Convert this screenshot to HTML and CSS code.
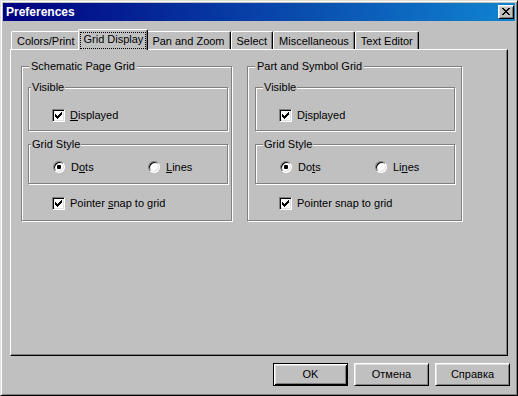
FILE: index.html
```html
<!DOCTYPE html>
<html>
<head>
<meta charset="utf-8">
<title>Preferences</title>
<link rel="stylesheet" href="styles.css">
</head>
<body>
<div class="window">
  <div class="titlebar">
    <span class="title">Preferences</span>
    <div class="close">
      <svg width="8" height="7" viewBox="0 0 8 7" shape-rendering="crispEdges"><path d="M0 0h2v1H0zM6 0h2v1H6zM1 1h2v1H1zM5 1h2v1H5zM2 2h4v1H2zM3 3h2v1H3zM2 4h4v1H2zM1 5h2v1H1zM5 5h2v1H5zM0 6h2v1H0zM6 6h2v1H6z" fill="#000"/></svg>
    </div>
  </div>
  <div class="content">
    <div class="tabs">
      <div class="tab">Colors/Print</div>
      <div class="tab tab-active"><span class="focus">Grid Display</span></div>
      <div class="tab">Pan and Zoom</div>
      <div class="tab">Select</div>
      <div class="tab">Miscellaneous</div>
      <div class="tab">Text Editor</div>
    </div>
    <div class="panel">
      <div class="groups">
        <div class="group group-left">
          <div class="group-title">Schematic Page Grid</div>
          <div class="sub sub-visible">
            <div class="sub-title">Visible</div>
            <div class="check-row">
              <span class="cb"><svg width="7" height="7" viewBox="0 0 7 7" shape-rendering="crispEdges"><path d="M0 2h1v3H0zM1 3h1v3H1zM2 4h1v3H2zM3 3h1v3H3zM4 2h1v3H4zM5 1h1v3H5zM6 0h1v3H6z" fill="#000"/></svg></span>
              <span class="label"><u>D</u>isplayed</span>
            </div>
          </div>
          <div class="sub sub-style">
            <div class="sub-title">Grid Style</div>
            <div class="radio-row">
              <div class="opt opt-first"><span class="rb rb-on"></span><span class="label">D<u>o</u>ts</span></div>
              <div class="opt"><span class="rb"></span><span class="label"><u>L</u>ines</span></div>
            </div>
          </div>
          <div class="check-row snap">
            <span class="cb"><svg width="7" height="7" viewBox="0 0 7 7" shape-rendering="crispEdges"><path d="M0 2h1v3H0zM1 3h1v3H1zM2 4h1v3H2zM3 3h1v3H3zM4 2h1v3H4zM5 1h1v3H5zM6 0h1v3H6z" fill="#000"/></svg></span>
            <span class="label">Pointer <u>s</u>nap to grid</span>
          </div>
        </div>
        <div class="group group-right">
          <div class="group-title">Part and Symbol Grid</div>
          <div class="sub sub-visible">
            <div class="sub-title">Visible</div>
            <div class="check-row">
              <span class="cb"><svg width="7" height="7" viewBox="0 0 7 7" shape-rendering="crispEdges"><path d="M0 2h1v3H0zM1 3h1v3H1zM2 4h1v3H2zM3 3h1v3H3zM4 2h1v3H4zM5 1h1v3H5zM6 0h1v3H6z" fill="#000"/></svg></span>
              <span class="label">D<u>i</u>splayed</span>
            </div>
          </div>
          <div class="sub sub-style">
            <div class="sub-title">Grid Style</div>
            <div class="radio-row">
              <div class="opt opt-first"><span class="rb rb-on"></span><span class="label">Do<u>t</u>s</span></div>
              <div class="opt"><span class="rb"></span><span class="label">Li<u>n</u>es</span></div>
            </div>
          </div>
          <div class="check-row snap">
            <span class="cb"><svg width="7" height="7" viewBox="0 0 7 7" shape-rendering="crispEdges"><path d="M0 2h1v3H0zM1 3h1v3H1zM2 4h1v3H2zM3 3h1v3H3zM4 2h1v3H4zM5 1h1v3H5zM6 0h1v3H6z" fill="#000"/></svg></span>
            <span class="label">Pointer snap to grid</span>
          </div>
        </div>
      </div>
    </div>
    <div class="buttons">
      <div class="btn btn-default">OK</div>
      <div class="btn">Отмена</div>
      <div class="btn">Справка</div>
    </div>
  </div>
</div>
</body>
</html>
```
FILE: styles.css
```css
* { box-sizing: border-box; }
html, body { margin: 0; padding: 0; }
body {
  width: 518px;
  height: 396px;
  overflow: hidden;
  background: #c0c0c0;
  font-family: "Liberation Sans", Arial, sans-serif;
  font-size: 11px;
  line-height: 13px;
  color: #000;
}
.window {
  width: 518px;
  height: 396px;
  background: #c0c0c0;
  border: 1px solid;
  border-color: #dfdfdf #000 #000 #dfdfdf;
  box-shadow: inset 1px 1px #fff, inset -1px -1px #808080;
  padding: 2px;
  display: flex;
  flex-direction: column;
}
.titlebar {
  height: 18px;
  flex: none;
  background: linear-gradient(to right, #000080, #1084d0);
  display: flex;
  align-items: center;
  justify-content: space-between;
  padding: 0 1px 0 3px;
}
.title {
  color: #fff;
  font-weight: bold;
  font-size: 12px;
  line-height: 14px;
}
.close {
  width: 16px;
  height: 14px;
  background: #c0c0c0;
  border: 1px solid;
  border-color: #fff #000 #000 #fff;
  box-shadow: inset 1px 1px #dfdfdf, inset -1px -1px #808080;
  padding: 2px 0 0 3px;
  display: flex;
  align-items: flex-start;
}
.close svg { display: block; }
.content {
  flex: 1;
  padding: 8px 7px 0;
  display: flex;
  flex-direction: column;
}
.tabs {
  height: 20px;
  display: flex;
  align-items: flex-end;
  padding-left: 1px;
}
.tab {
  height: 18px;
  padding: 3px 5px 0;
  border-left: 1px solid #fff;
  border-top: 1px solid #fff;
  border-right: 1px solid #000;
  border-radius: 2px 2px 0 0;
  box-shadow: inset -1px 0 #808080;
  white-space: nowrap;
  background: #c0c0c0;
}
.tab-active {
  height: 21px;
  margin: 0 -2px -1px;
  padding: 2px 1px 0;
  position: relative;
  z-index: 1;
}
.focus {
  display: block;
  border: 1px dotted #000;
  padding: 0 2px 2px;
  line-height: 13px;
}
.panel {
  height: 307px;
  border: 1px solid;
  border-color: #fff #000 #000 #fff;
  box-shadow: inset -1px -1px #808080;
  padding: 16px 0 0 10px;
}
.groups {
  display: flex;
  gap: 15px;
}
.group {
  height: 155px;
  border: 1px solid #808080;
  box-shadow: inset 1px 1px #fff, 1px 1px #fff;
}
.group-left { width: 211px; }
.group-right { width: 215px; }
.group-title {
  width: fit-content;
  margin: -7px 0 0 7px;
  padding: 0 2px;
  background: #c0c0c0;
  line-height: 13px;
}
.sub {
  width: 200px;
  border: 1px solid #808080;
  box-shadow: inset 1px 1px #fff, 1px 1px #fff;
  margin-left: 6px;
}
.group-right .sub { margin-left: 7px; }
.sub-visible { height: 44px; margin-top: 14px; }
.sub-style { height: 40px; margin-top: 13px; }
.sub-title {
  width: fit-content;
  margin: -7px 0 0 2px;
  padding: 0 1px;
  background: #c0c0c0;
}
.group-right .sub-title { margin-left: 7px; }
.check-row {
  height: 13px;
  display: flex;
  align-items: center;
  gap: 5px;
  margin: 15px 0 0 23px;
}
.check-row.snap { margin: 13px 0 0 30px; }
.group-right .check-row.snap { margin-left: 31px; }
.cb {
  width: 13px;
  height: 13px;
  flex: none;
  background: #fff;
  border: 1px solid;
  border-color: #808080 #fff #fff #808080;
  box-shadow: inset 1px 1px #000, inset -1px -1px #dfdfdf;
  padding: 2px 0 0 2px;
}
.cb svg { display: block; }
.radio-row {
  display: flex;
  margin: 10px 0 0 24px;
  height: 12px;
}
.opt {
  display: flex;
  align-items: center;
  gap: 6px;
}
.opt-first { width: 95px; }
.rb {
  width: 12px;
  height: 12px;
  flex: none;
  border-radius: 50%;
  background: #fff;
  border: 1px solid;
  border-color: #808080 #fff #fff #808080;
  box-shadow: inset 1px 1px #000, inset -1px -1px #dfdfdf;
  display: flex;
  align-items: center;
  justify-content: center;
}
.rb-on::after {
  content: "";
  width: 4px;
  height: 4px;
  border-radius: 1px;
  background: #000;
}
.label { white-space: nowrap; }
.buttons {
  display: flex;
  justify-content: flex-end;
  gap: 6px;
  margin: 7px -2px 0 0;
}
.btn {
  width: 75px;
  height: 23px;
  border: 1px solid;
  border-color: #fff #000 #000 #fff;
  box-shadow: inset 1px 1px #dfdfdf, inset -1px -1px #808080;
  display: flex;
  align-items: center;
  justify-content: center;
}
.btn-default {
  border-color: #000;
  box-shadow: inset 1px 1px #fff, inset -1px -1px #000, inset 2px 2px #dfdfdf, inset -2px -2px #808080;
}
```
